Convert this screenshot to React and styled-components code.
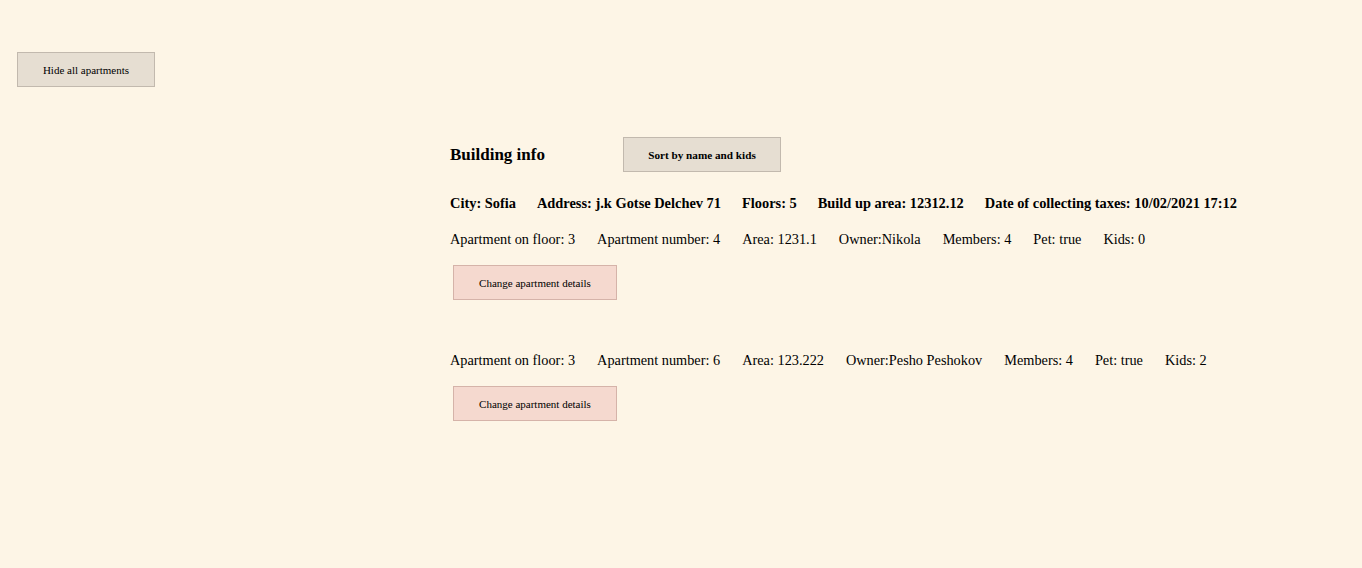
import React from 'react';
import styled, { createGlobalStyle } from 'styled-components';

const GlobalStyle = createGlobalStyle`
  html, body {
    margin: 0;
    padding: 0;
    background: #fdf5e6;
    font-family: "Liberation Serif", "Times New Roman", serif;
    color: #000;
  }
`;

const Page = styled.main`
  min-height: 568px;
  padding: 52px 17px 40px;
  box-sizing: border-box;
`;

const Button = styled.button`
  height: 35px;
  padding: 0;
  font-family: "Liberation Serif", serif;
  font-size: ${(p) => (p.$bold ? 11.2 : 11)}px;
  font-weight: ${(p) => (p.$bold ? 'bold' : 'normal')};
  color: #000;
  background: ${(p) => (p.$tone === 'rose' ? '#f5d9cf' : '#e6ded2')};
  border: 1px solid ${(p) => (p.$tone === 'rose' ? '#d5b3a9' : '#c2b9ae')};
  width: ${(p) => p.$width}px;
  cursor: pointer;
`;

const Content = styled.section`
  padding-left: 433px;
  margin-top: 50px;
`;

const Header = styled.div`
  display: flex;
  align-items: center;
`;

const Title = styled.h3`
  margin: 0 78px 0 0;
  font-size: 17px;
  font-weight: bold;
`;

const InfoRow = styled.div`
  display: flex;
  gap: ${(p) => (p.$bold ? 21 : 22)}px;
  font-size: ${(p) => (p.$bold ? 14.4 : 14.3)}px;
  line-height: 17px;
  font-weight: ${(p) => (p.$bold ? 'bold' : 'normal')};
  margin-top: ${(p) => p.$top}px;
  white-space: nowrap;
`;

const Apartment = styled.article`
  margin-top: ${(p) => p.$top}px;
`;

const ButtonBox = styled.div`
  margin: 17px 0 0 3px;
`;

const building = [
  'City: Sofia',
  'Address: j.k Gotse Delchev 71',
  'Floors: 5',
  'Build up area: 12312.12',
  'Date of collecting taxes: 10/02/2021 17:12',
];

const apartments = [
  { floor: 3, number: 4, area: '1231.1', owner: 'Nikola', members: 4, pet: 'true', kids: 0 },
  { floor: 3, number: 6, area: '123.222', owner: 'Pesho Peshokov', members: 4, pet: 'true', kids: 2 },
];

export default function App() {
  return (
    <>
      <GlobalStyle />
      <Page>
        <Button $width={138}>Hide all apartments</Button>
        <Content>
          <Header>
            <Title>Building info</Title>
            <Button $bold $width={158}>Sort by name and kids</Button>
          </Header>
          <InfoRow $bold $top={23}>
            {building.map((b) => (
              <span key={b}>{b}</span>
            ))}
          </InfoRow>
          {apartments.map((a, i) => (
            <Apartment key={a.number} $top={i === 0 ? 19 : 52}>
              <InfoRow $top={0}>
                <span>Apartment on floor: {a.floor}</span>
                <span>Apartment number: {a.number}</span>
                <span>Area: {a.area}</span>
                <span>Owner:{a.owner}</span>
                <span>Members: {a.members}</span>
                <span>Pet: {a.pet}</span>
                <span>Kids: {a.kids}</span>
              </InfoRow>
              <ButtonBox>
                <Button $tone="rose" $width={164}>Change apartment details</Button>
              </ButtonBox>
            </Apartment>
          ))}
        </Content>
      </Page>
    </>
  );
}
